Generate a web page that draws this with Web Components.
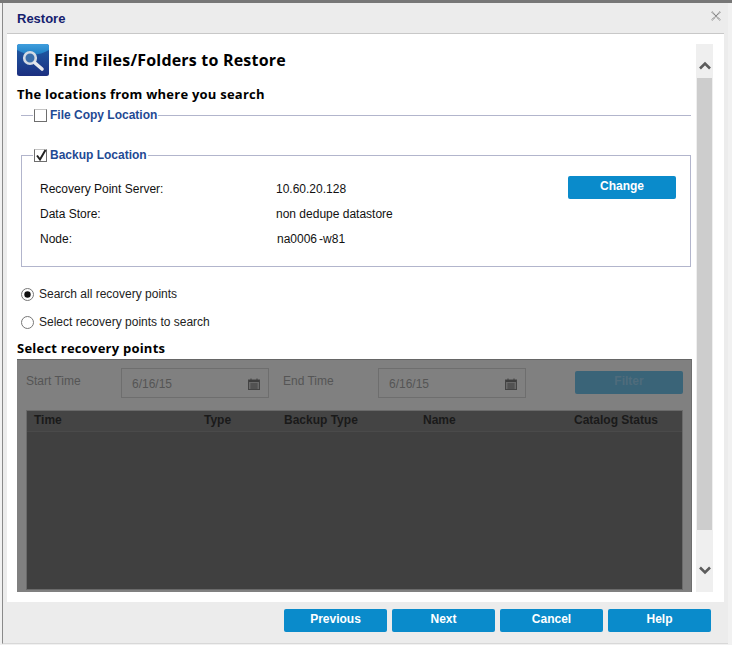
<!DOCTYPE html>
<html>
<head>
<meta charset="utf-8">
<title>Restore</title>
<style>
html, body { margin: 0; padding: 0; height: 645px; overflow: hidden; }
body { background: #f1f1f1; font-family: "Liberation Sans", Arial, sans-serif; font-size: 12px; color: #000; border-top: 3px solid #777; box-sizing: border-box; }
</style>
</head>
<body>
<template id="dialog-tpl">
  <style>
    :host { display: block; width: 726px; height: 641px; margin-left: 2px; background: #ececec; border-left: 1px solid #8a8a8a; border-bottom: 1px solid #d8d8d8; box-sizing: border-box; }
    .head { height: 30px; box-sizing: border-box; display: flex; align-items: center; justify-content: space-between; padding: 1px 7px 0 14px; color: #14216e; font-size: 13px; font-weight: bold; }
    .head svg { align-self: flex-start; margin-top: 7px; }
    .body { margin: 0 4px 0 4px; background: #fff; border-top: 1px solid #c8c8c8; height: 569px; box-sizing: border-box; padding: 10px 10px 10px 10px; display: grid; grid-template-columns: 675px 17px; column-gap: 4px; }
    .main { display: flex; flex-direction: column; min-width: 0; }
    .foot { display: flex; justify-content: flex-end; gap: 5px; padding: 7px 17px 0 0; }
  </style>
  <div class="head"><span>Restore</span>
    <svg width="10" height="10" viewBox="0 0 10 10"><path d="M.8.8l8.4 8.4M9.2.8L.8 9.2" stroke="#7c7c7c" stroke-width="1.5" stroke-dasharray="1 .6" fill="none"/></svg>
  </div>
  <div class="body">
    <div class="main"><slot></slot></div>
    <rs-scrollbar></rs-scrollbar>
  </div>
  <div class="foot"><slot name="foot"></slot></div>
</template>

<template id="scrollbar-tpl">
  <style>
    :host { display: flex; flex-direction: column; align-items: center; background: #efefef; height: 548px; }
    .end { height: 34px; width: 100%; display: flex; align-items: center; justify-content: center; flex: none; padding-top: 8px; box-sizing: border-box; }
    .bot { height: 62px; padding-top: 18px; }
    .thumb { flex: 1; width: 15px; background: #cdcdcd; }
  </style>
  <div class="end"><svg width="12" height="9" viewBox="0 0 12 9"><path d="M1 7.5L6 2.5l5 5" stroke="#5c5c5c" stroke-width="2.6" fill="none"/></svg></div>
  <div class="thumb"></div>
  <div class="end bot"><svg width="12" height="9" viewBox="0 0 12 9"><path d="M1 1.5L6 6.5l5-5" stroke="#5c5c5c" stroke-width="2.6" fill="none"/></svg></div>
</template>

<template id="title-tpl">
  <style>
    :host { display: flex; align-items: center; gap: 5px; height: 32px; }
    span { font-family: "Open Sans", sans-serif; font-weight: 700; font-size: 16px; letter-spacing: .2px; color: #000; }
  </style>
  <svg width="32" height="32" viewBox="0 0 32 32">
    <defs>
      <linearGradient id="bg" x1="0" y1="0" x2="0" y2="1"><stop offset="0" stop-color="#1f5fa8"/><stop offset="1" stop-color="#1c2f80"/></linearGradient>
      <linearGradient id="sheen" x1="0" y1="0" x2="0" y2="1"><stop offset="0" stop-color="#3f9edd"/><stop offset="1" stop-color="#1f7fc4"/></linearGradient>
    </defs>
    <rect width="32" height="32" rx="2.5" fill="url(#bg)"/>
    <path d="M2.5 0H29.5A2.5 2.5 0 0 1 32 2.5V6Q16 15 0 6V2.5A2.5 2.5 0 0 1 2.5 0Z" fill="url(#sheen)"/>
    <circle cx="13" cy="14" r="5.8" fill="#3a6eaa" stroke="#d5dbe4" stroke-width="2.6"/>
    <path d="M18 19l7 6" stroke="#e6e8ec" stroke-width="3.6" stroke-linecap="round"/>
  </svg>
  <span><slot></slot></span>
</template>

<template id="heading-tpl">
  <style>
    :host { display: block; font-family: "Open Sans", sans-serif; font-weight: 700; font-size: 13px; letter-spacing: .23px; line-height: 16px; color: #000; }
  </style>
  <slot></slot>
</template>

<template id="group-tpl">
  <style>
    :host { display: block; margin-left: 4px; margin-right: 1px; }
    fieldset { margin: 0; padding: 0; border: 1px solid #b2b5cc; min-height: 0; }
    :host([collapsed]) fieldset { border-width: 1px 0 0 0; }
    legend { margin-left: 11px; padding: 0 1px; display: flex; align-items: center; gap: 3px; height: 14px; font-weight: bold; font-size: 12px; color: #1f4a94; }
    :host([collapsed]) legend { margin-left: 12px; }
    .box { width: 13px; height: 13px; border: 1px solid #6e6e6e; border-top-color: #c4c4c4; box-sizing: border-box; position: relative; background: #fff; flex: none; }
    svg { position: absolute; left: 0; top: -1px; display: none; }
    :host([checked]) svg { display: block; }
  </style>
  <fieldset>
    <legend><span class="box"><svg width="13" height="13" viewBox="0 0 13 13"><path d="M2 6.5l3 4 5.5-9.5" stroke="#222" stroke-width="2" fill="none"/></svg></span><span class="lbl"></span></legend>
    <slot></slot>
  </fieldset>
</template>

<template id="info-tpl">
  <style>
    :host { display: grid; grid-template-columns: 236px 1fr; height: 25px; align-items: center; font-size: 12px; color: #111; }
  </style>
  <span class="k"></span><span><slot></slot></span>
</template>

<template id="radio-tpl">
  <style>
    :host { display: flex; align-items: center; gap: 5px; height: 28px; margin-left: 4px; font-size: 12px; color: #222; }
    svg { flex: none; }
    circle.dot { display: none; }
    :host([checked]) circle.dot { display: block; }
  </style>
  <svg width="13" height="13" viewBox="0 0 13 13"><circle cx="6.5" cy="6.5" r="6" fill="#fff" stroke="#777"/><circle class="dot" cx="6.5" cy="6.5" r="3.2" fill="#111"/></svg>
  <slot></slot>
</template>

<template id="button-tpl">
  <style>
    :host { display: flex; align-items: center; justify-content: center; width: 103px; height: 23px; padding-bottom: 3px; box-sizing: border-box; background: var(--btn-bg, #0a8bcb); color: var(--btn-fg, #fff); border-radius: 2px; font-weight: bold; font-size: 12px; flex: none; }
  </style>
  <slot></slot>
</template>

<template id="date-tpl">
  <style>
    :host { display: flex; align-items: center; justify-content: space-between; width: 148px; height: 30px; box-sizing: border-box; border: 1px solid #6e6e6e; padding: 2px 8px 0 10px; color: #555; font-size: 12px; flex: none; }
  </style>
  <slot></slot>
  <svg width="12" height="12" viewBox="0 0 12 12"><rect x=".5" y="2" width="11" height="9.5" fill="#6a6a6a" stroke="#444"/><rect x="1" y="2" width="10" height="2" fill="#3e3e3e"/><path d="M3 .5v3M9 .5v3" stroke="#3e3e3e"/><path d="M2 6h8M2 8h8M2 10h8M4 5v6M6 5v6M8 5v6" stroke="#3e3e3e" stroke-width=".6"/></svg>
</template>

<template id="panel-tpl">
  <style>
    :host { display: block; height: 233px; background: #808080; border-top: 1px solid #666; border-right: 1px solid #6e6e6e; box-sizing: border-box; color: #555; }
    .filters { display: flex; align-items: flex-start; height: 50px; box-sizing: border-box; padding: 8px 8px 0 9px; }
    .lab { font-size: 12px; line-height: 27px; }
    .l1 { width: 95px; } .l2 { width: 95px; margin-left: 14px; }
    .sp { flex: 1; }
    .table { margin: 0 8px 0 9px; height: 180px; background: #404040; border: 1px solid #6a6a6a; box-sizing: border-box; }
    .thead { display: grid; grid-template-columns: 170px 80px 139px 151px 1fr; height: 21px; padding-bottom: 2px; box-sizing: border-box; align-items: center; padding-left: 7px; background: #444; border-bottom: 1px solid #4a4a4a; color: #1a1a1a; font-weight: bold; font-size: 12px; }
    rs-button { --btn-bg: #3a6478; --btn-fg: #4f6c7c; width: 108px; margin-top: 3px; }
  </style>
  <div class="filters">
    <span class="lab l1">Start Time</span><rs-date>6/16/15</rs-date>
    <span class="lab l2">End Time</span><rs-date>6/16/15</rs-date>
    <span class="sp"></span><rs-button>Filter</rs-button>
  </div>
  <div class="table"><div class="thead"><span>Time</span><span>Type</span><span>Backup Type</span><span>Name</span><span>Catalog Status</span></div></div>
</template>

<rs-dialog>
  <rs-title>Find Files/Folders to Restore</rs-title>
  <rs-heading style="margin-top:10px">The locations from where you search</rs-heading>
  <rs-group label="File Copy Location" collapsed style="margin-top:6px"></rs-group>
  <rs-group label="Backup Location" checked style="margin-top:26px">
    <div style="padding:14px 14px 15px 18px;position:relative;height:75px">
      <rs-info label="Recovery Point Server:">10.60.20.128</rs-info>
      <rs-info label="Data Store:">non dedupe datastore</rs-info>
      <rs-info label="Node:"><span style="margin-left:1px">na0006</span><span style="margin-left:2px">-w81</span></rs-info>
      <rs-button style="position:absolute;right:14px;top:14px;width:108px">Change</rs-button>
    </div>
  </rs-group>
  <rs-radio checked style="margin-top:13px">Search all recovery points</rs-radio>
  <rs-radio>Select recovery points to search</rs-radio>
  <rs-heading style="margin-top:4px;margin-bottom:3px">Select recovery points</rs-heading>
  <rs-panel></rs-panel>
  <rs-button slot="foot">Previous</rs-button>
  <rs-button slot="foot">Next</rs-button>
  <rs-button slot="foot">Cancel</rs-button>
  <rs-button slot="foot">Help</rs-button>
</rs-dialog>

<script>
// plain template-backed elements
function simple(tag, tplId) {
    customElements.define(tag, class extends HTMLElement {
        constructor() {
            super();
            this.attachShadow({ mode: 'open' });
            this.shadowRoot.appendChild(document.getElementById(tplId).content.cloneNode(true));
        }
    });
}
['dialog', 'scrollbar', 'title', 'heading', 'radio', 'button', 'date', 'panel'].forEach(n => simple('rs-' + n, n + '-tpl'));

class RsGroup extends HTMLElement {
    constructor() {
        super();
        this.attachShadow({ mode: 'open' });
        this.shadowRoot.appendChild(document.getElementById('group-tpl').content.cloneNode(true));
    }
    connectedCallback() {
        this.shadowRoot.querySelector('.lbl').textContent = this.getAttribute('label');
    }
}
customElements.define('rs-group', RsGroup);

class RsInfo extends HTMLElement {
    constructor() {
        super();
        this.attachShadow({ mode: 'open' });
        this.shadowRoot.appendChild(document.getElementById('info-tpl').content.cloneNode(true));
    }
    connectedCallback() {
        this.shadowRoot.querySelector('.k').textContent = this.getAttribute('label');
    }
}
customElements.define('rs-info', RsInfo);
</script>
</body>
</html>
